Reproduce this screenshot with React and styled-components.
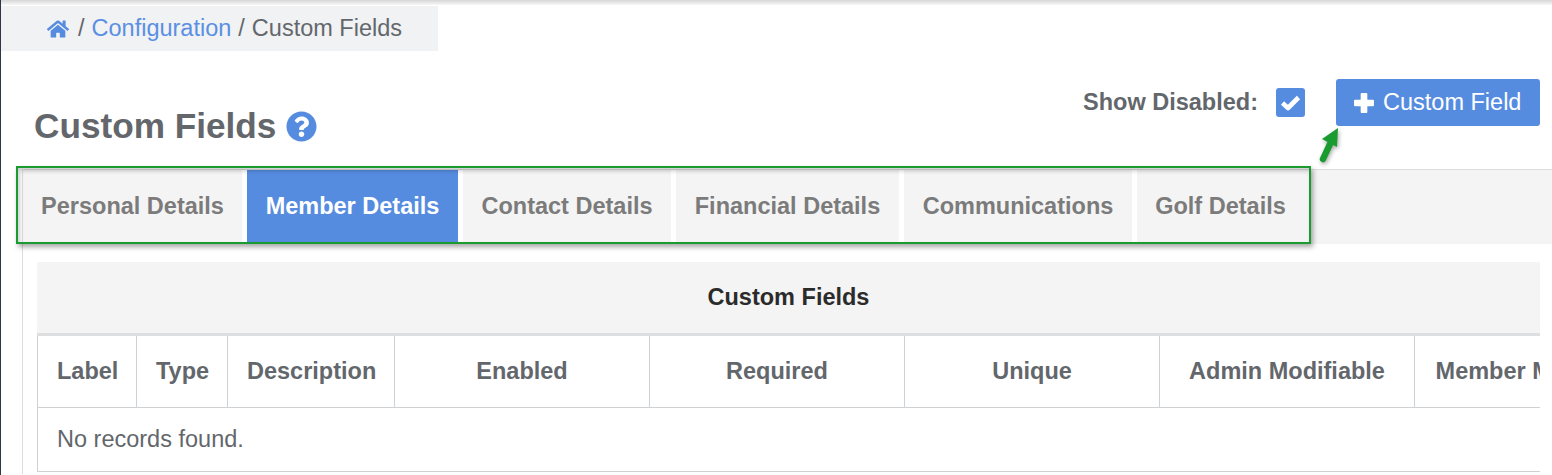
import React from "react";
import styled, { createGlobalStyle } from "styled-components";
import { FaHome, FaQuestionCircle } from "react-icons/fa";

const GlobalStyle = createGlobalStyle`
  html, body {
    margin: 0;
    padding: 0;
    background: #fff;
  }
  body {
    font-family: "Liberation Sans", Arial, sans-serif;
    overflow: hidden;
  }
`;

const Page = styled.div`
  position: relative;
  width: 1552px;
  height: 475px;
  box-sizing: border-box;
  overflow: hidden;
  padding-top: 6px;
  border-left: 1px solid #2f3742;
  color: #63676c;
  &::before {
    content: " ";
    position: absolute;
    top: 0;
    left: -1px;
    right: 0;
    height: 5px;
    background: linear-gradient(to bottom, #d6d6d6, #f8f8f8);
  }
`;

const Breadcrumb = styled.nav`
  width: 437px;
  height: 45px;
  box-sizing: border-box;
  padding-left: 46px;
  display: flex;
  align-items: center;
  gap: 7px;
  background: #f1f2f4;
  font-size: 23.5px;
  color: #63676c;
`;

const Crumb = styled.a`
  color: #5a8fe3;
  text-decoration: none;
`;

const HomeIcon = styled(FaHome)`
  width: 22px;
  height: 20px;
  color: #558ce0;
  margin-right: 2px;
`;

const Header = styled.header`
  height: 118px;
  display: flex;
  justify-content: space-between;
  padding: 28px 12px 0 33px;
  box-sizing: border-box;
`;

const Title = styled.h1`
  margin: 26px 0 0;
  height: 42px;
  display: flex;
  align-items: center;
  gap: 10px;
  font-size: 35.2px;
  font-weight: bold;
  color: #63676c;
`;

const HelpIcon = styled(FaQuestionCircle)`
  width: 31px;
  height: 31px;
  color: #558ce0;
`;

const Actions = styled.div`
  display: flex;
  align-items: flex-start;
`;

const ShowLabel = styled.span`
  font-size: 23.5px;
  font-weight: bold;
  line-height: 47px;
  color: #63676c;
`;

const CheckBox = styled.span`
  width: 29px;
  height: 29px;
  margin: 9px 31px 0 18px;
  border-radius: 3px;
  background: #558ce0;
  display: flex;
  align-items: center;
  justify-content: center;
`;

const AddButton = styled.button`
  width: 204px;
  height: 47px;
  border: 0;
  border-radius: 3px;
  background: #558ce0;
  color: #fff;
  font-family: inherit;
  font-size: 23.5px;
  display: flex;
  align-items: center;
  gap: 9px;
  padding: 0 0 0 18px;
`;

const Body = styled.div`
  margin-left: 21px;
  border-left: 1px solid #dcdcdc;
  height: 305px;
`;

const TabBar = styled.ul`
  list-style: none;
  margin: 0 0 0 -1px;
  padding: 0;
  height: 74px;
  display: flex;
  background: #f4f4f4;
  border-top: 1px solid #dcdcdc;
  border-left: 1px solid #dcdcdc;
  border-top-left-radius: 3px;
`;

const Tab = styled.li`
  width: ${({ $width }) => $width}px;
  display: flex;
  align-items: center;
  justify-content: center;
  padding-bottom: 2px;
  font-size: 23.5px;
  font-weight: bold;
  color: ${({ $active }) => ($active ? "#fff" : "#7b7b7b")};
  background: ${({ $active }) => ($active ? "#558ce0" : "#f4f4f4")};
  border-right: 5px solid ${({ $last }) => ($last ? "transparent" : "#fff")};
`;

const Panel = styled.section`
  margin: 18px 12px 0 14px;
  overflow: hidden;
  background: #f9f9f9;
`;

const PanelTitle = styled.h2`
  margin: 0;
  height: 70px;
  padding-bottom: 1px;
  display: flex;
  align-items: center;
  justify-content: center;
  background: #f4f4f4;
  border-bottom: 3px solid #dcdedf;
  border-radius: 3px 3px 0 0;
  font-size: 23.5px;
  font-weight: bold;
  color: #2b2b2b;
`;

const Table = styled.table`
  table-layout: fixed;
  width: 1757px;
  border-collapse: collapse;
  background: #fff;
  font-size: 23.5px;
`;

const Th = styled.th`
  height: 71px;
  box-sizing: border-box;
  padding: 0 19px;
  border: 1px solid #cfd2d4;
  border-top: 0;
  font-weight: bold;
  color: #63676c;
  text-align: center;
  white-space: nowrap;
`;

const Td = styled.td`
  height: 63px;
  padding: 0 19px;
  border: 1px solid #cfd2d4;
  color: #63676c;
`;

const Callout = styled.div`
  position: absolute;
  left: 15px;
  top: 166px;
  width: 1295px;
  height: 78px;
  box-sizing: border-box;
  border: 2px solid #1a9b2f;
  box-shadow: 2px 3px 5px rgba(0, 0, 0, 0.35),
    inset 2px 3px 4px rgba(0, 0, 0, 0.2);
`;

const Arrow = styled.svg`
  position: absolute;
  left: 1315px;
  top: 126px;
  filter: drop-shadow(1px 2px 2px rgba(0, 0, 0, 0.35));
`;

const tabs = [
  { label: "Personal Details", width: 219 },
  { label: "Member Details", width: 211, active: true },
  { label: "Contact Details", width: 208 },
  { label: "Financial Details", width: 223 },
  { label: "Communications", width: 228 },
  { label: "Golf Details", width: 167, last: true },
];

const columns = [
  { label: "Label", width: 99 },
  { label: "Type", width: 91 },
  { label: "Description", width: 167 },
  { label: "Enabled", width: 255 },
  { label: "Required", width: 255 },
  { label: "Unique", width: 255 },
  { label: "Admin Modifiable", width: 255 },
  { label: "Member Modifiable", width: 255 },
  { label: "", width: 125 },
];

export default function App() {
  return (
    <Page>
      <GlobalStyle />
      <Breadcrumb>
        <HomeIcon />
        <span>/</span>
        <Crumb href="#">Configuration</Crumb>
        <span>/</span>
        <span>Custom Fields</span>
      </Breadcrumb>
      <Header>
        <Title>
          Custom Fields
          <HelpIcon />
        </Title>
        <Actions>
          <ShowLabel>Show Disabled:</ShowLabel>
          <CheckBox>
            <svg width="21" height="16" viewBox="0 0 21 16">
              <polyline
                points="2.5,8 8,13 18.5,2.5"
                fill="none"
                stroke="#fff"
                strokeWidth="4.6"
                strokeLinejoin="round"
              />
            </svg>
          </CheckBox>
          <AddButton>
            <svg width="20" height="20" viewBox="1 1 18 18">
              <path
                d="M8 1h4a1 1 0 0 1 1 1v5h5a1 1 0 0 1 1 1v4a1 1 0 0 1-1 1h-5v5a1 1 0 0 1-1 1H8a1 1 0 0 1-1-1v-5H2a1 1 0 0 1-1-1V8a1 1 0 0 1 1-1h5V2a1 1 0 0 1 1-1z"
                fill="#fff"
              />
            </svg>
            Custom Field
          </AddButton>
        </Actions>
      </Header>
      <Body>
        <TabBar>
          {tabs.map((tab) => (
            <Tab
              key={tab.label}
              $width={tab.width}
              $active={tab.active}
              $last={tab.last}
            >
              {tab.label}
            </Tab>
          ))}
        </TabBar>
        <Panel>
          <PanelTitle>Custom Fields</PanelTitle>
          <Table>
            <colgroup>
              {columns.map((col) => (
                <col key={col.label} width={col.width} />
              ))}
            </colgroup>
            <thead>
              <tr>
                {columns.map((col) => (
                  <Th key={col.label}>{col.label}</Th>
                ))}
              </tr>
            </thead>
            <tbody>
              <tr>
                <Td colSpan={columns.length}>No records found.</Td>
              </tr>
            </tbody>
          </Table>
        </Panel>
      </Body>
      <Callout />
      <Arrow width="26" height="40" viewBox="0 0 26 40">
        <path
          d="M7 33 L14 18"
          stroke="#1a9b2f"
          strokeWidth="6.5"
          strokeLinecap="round"
          fill="none"
        />
        <path d="M22 2 L21 21 L6 13 Z" fill="#1a9b2f" />
      </Arrow>
    </Page>
  );
}
